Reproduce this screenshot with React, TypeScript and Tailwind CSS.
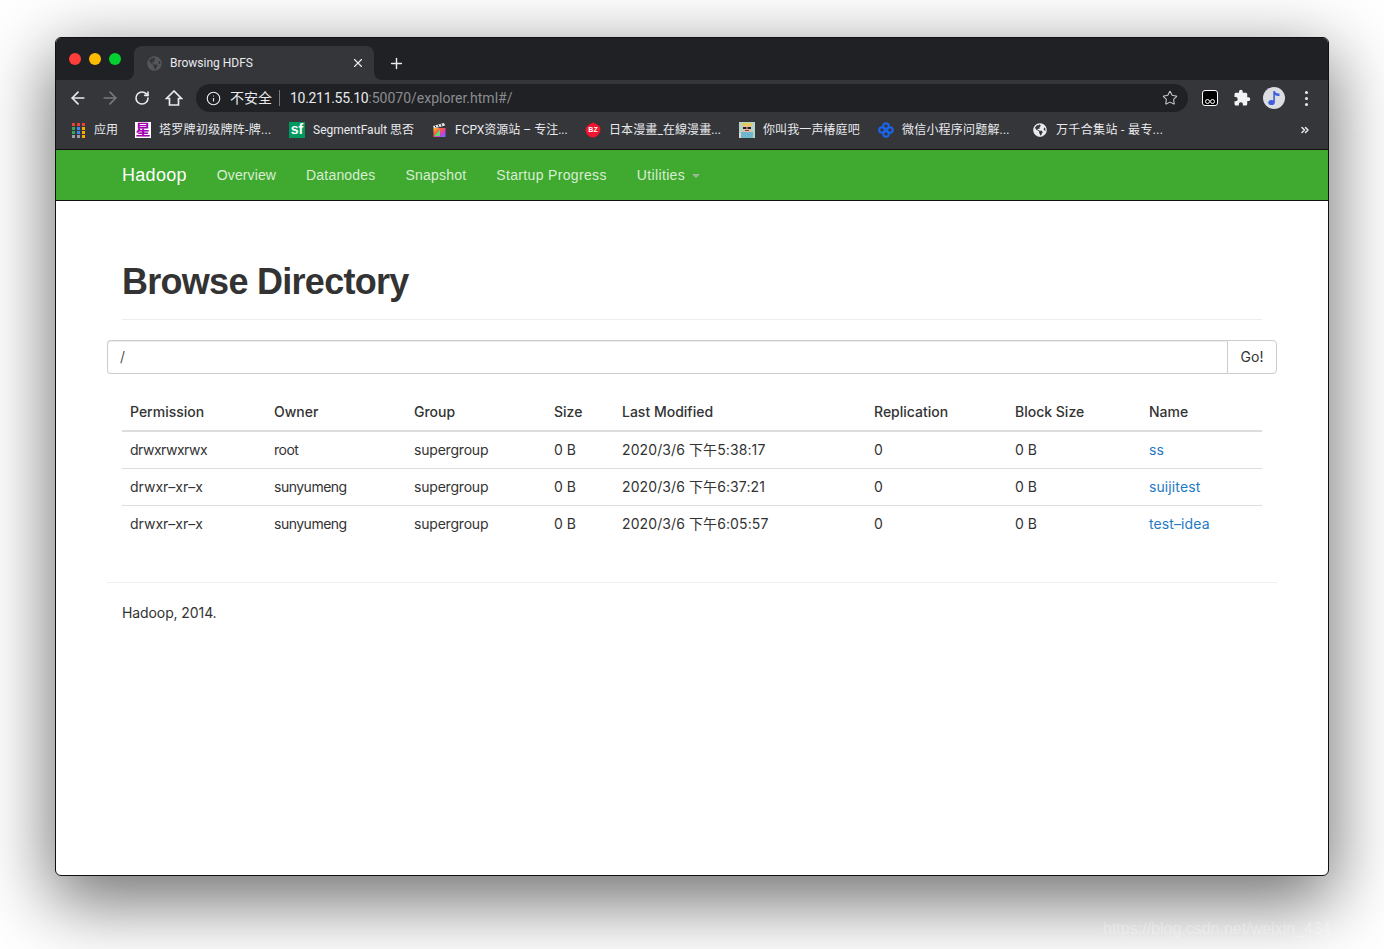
import { ArrowLeft, ArrowRight, ChevronsRight, Info, Plus, RotateCw, Star, X } from "lucide-react";
import { FaGlobeAmericas } from "react-icons/fa";
import { MdExtension } from "react-icons/md";

const cjk = "font-['Roboto','Noto_Sans_CJK_SC',sans-serif]";

const rows = [
  { perm: "drwxrwxrwx", permClass: "tracking-[-0.5px]", owner: "root", time: "2020/3/6 下午5:38:17", name: "ss" },
  { perm: "drwxr–xr–x", permClass: "tracking-[0px]", owner: "sunyumeng", time: "2020/3/6 下午6:37:21", name: "suijitest" },
  { perm: "drwxr–xr–x", permClass: "tracking-[0px]", owner: "sunyumeng", time: "2020/3/6 下午6:05:57", name: "test–idea" },
];

function AppsIcon() {
  const colors = [
    "bg-[#ea4335]", "bg-[#ea4335]", "bg-[#ea4335]",
    "bg-[#34a853]", "bg-[#4285f4]", "bg-[#f9ab00]",
    "bg-[#34a853]", "bg-[#4285f4]", "bg-[#f9ab00]",
    "bg-[#9aa0a6]", "bg-[#9aa0a6]", "bg-[#f9ab00]",
  ];
  return (
    <div className="grid grid-cols-3 gap-x-[2px] gap-y-[1px] w-[13px]">
      {colors.map((c, i) => (
        <div key={i} className={`w-[3px] h-[3px] ${c}`} />
      ))}
    </div>
  );
}

function StarIcon() {
  return (
    <div className={`w-4 h-4 bg-white text-[#a000b0] text-[15px] leading-4 font-bold text-center overflow-hidden ${cjk}`}>星</div>
  );
}

function SfIcon() {
  return (
    <div className="w-4 h-4 bg-[#009a61] text-white text-[14px] leading-[15px] font-bold text-center font-['Liberation_Sans',sans-serif]">sf</div>
  );
}

function FcpxIcon() {
  return (
    <svg width="16" height="16" viewBox="0 0 16 16">
      <path d="M2 4 L13 1 L14 3.5 L3 6.5 Z" fill="#eee" />
      <path d="M4 3.5 L5 5.5 M7 2.8 L8 4.8 M10 2 L11 4" stroke="#222" strokeWidth="1" />
      <defs>
        <linearGradient id="fc" x1="0" y1="0" x2="1" y2="1">
          <stop offset="0" stopColor="#ffd23a" />
          <stop offset="0.35" stopColor="#ff5a3c" />
          <stop offset="0.7" stopColor="#d03cd8" />
          <stop offset="1" stopColor="#3a8cff" />
        </linearGradient>
      </defs>
      <rect x="2.5" y="6" width="12" height="9" fill="url(#fc)" />
      <path d="M3 14 L9 7.5 L9 14 Z" fill="#5bdc6a" />
    </svg>
  );
}

function BzIcon() {
  return (
    <div className="relative w-4 h-4">
      <svg width="16" height="16" viewBox="0 0 16 16" className="absolute inset-0">
        <path d="M8 0.5 C10 1.5 15.5 3 15.5 7 C15.5 12 11 15.5 8 15.5 C4.5 15.5 0.5 12 0.5 8 C0.5 4.5 5 2 8 0.5 Z" fill="#f0142f" />
      </svg>
      <div className="absolute inset-0 text-white text-[7px] leading-4 font-bold text-center font-['Liberation_Sans',sans-serif]">BZ</div>
    </div>
  );
}

function AvatarIcon() {
  return (
    <svg width="16" height="16" viewBox="0 0 16 16">
      <rect width="16" height="16" fill="#b6d3c8" />
      <rect x="3" y="1" width="10" height="3" fill="#e3cb63" />
      <rect x="4" y="4" width="8" height="6" fill="#e8b9a4" />
      <rect x="4" y="5" width="3.5" height="2" fill="#222" />
      <rect x="8.5" y="5" width="3.5" height="2" fill="#222" />
      <rect x="6" y="8" width="4" height="1" fill="#7a4a3a" />
      <rect x="2" y="10" width="12" height="6" fill="#6fb6cf" />
      <rect x="0" y="11" width="2" height="5" fill="#e8d8c8" />
    </svg>
  );
}

function CloverIcon() {
  return (
    <svg width="16" height="16" viewBox="0 0 16 16" fill="none" stroke="#1a66f0" strokeWidth="2">
      <circle cx="8" cy="4" r="2.8" />
      <circle cx="4" cy="8" r="2.8" />
      <circle cx="12" cy="8" r="2.8" />
      <circle cx="8" cy="12" r="2.8" />
    </svg>
  );
}

const bookmarks = [
  { icon: <AppsIcon />, label: "应用", width: "w-[65px]", extra: "" },
  { icon: <StarIcon />, label: "塔罗牌初级牌阵-牌...", width: "w-[154px]", extra: "tracking-[0.3px]" },
  { icon: <SfIcon />, label: "SegmentFault 思否", width: "w-[142px]", extra: "" },
  { icon: <FcpxIcon />, label: "FCPX资源站 – 专注...", width: "w-[154px]", extra: "" },
  { icon: <BzIcon />, label: "日本漫畫_在線漫畫...", width: "w-[154px]", extra: "tracking-[0.1px]" },
  { icon: <AvatarIcon />, label: "你叫我一声椿庭吧", width: "w-[139px]", extra: "tracking-[0.1px]" },
  { icon: <CloverIcon />, label: "微信小程序问题解...", width: "w-[154px]", extra: "tracking-[0.2px]" },
  { icon: <FaGlobeAmericas size={14} className="text-[#e8eaed]" />, label: "万千合集站 - 最专...", width: "w-[140px]", extra: "tracking-[0.35px]" },
];

function TabStrip() {
  return (
    <div className="h-[42px] bg-[#202124] flex items-end">
      <div className="w-[78px] h-full pl-[13px] pt-[15px] flex gap-2">
        <div className="w-3 h-3 rounded-full bg-[#fc3d39]" />
        <div className="w-3 h-3 rounded-full bg-[#fdbc00]" />
        <div className="w-3 h-3 rounded-full bg-[#02d12f]" />
      </div>
      <div className={`relative w-[240px] h-[34px] bg-[#35363a] rounded-t-lg flex items-center pl-[13px] pr-[9px] gap-2 text-[12px] text-[#e8eaed] ${cjk}`}>
        <div className="absolute -left-2 bottom-0 w-2 h-2 bg-[#35363a]">
          <div className="w-2 h-2 bg-[#202124] rounded-br-lg" />
        </div>
        <div className="absolute -right-2 bottom-0 w-2 h-2 bg-[#35363a]">
          <div className="w-2 h-2 bg-[#202124] rounded-bl-lg" />
        </div>
        <FaGlobeAmericas size={15} className="text-[#55565a] shrink-0" />
        <span className="flex-1">Browsing HDFS</span>
        <X size={14} strokeWidth={2} className="text-[#e8eaed]" />
      </div>
      <div className="ml-2 w-7 h-[34px] flex items-center justify-center">
        <Plus size={17} strokeWidth={2} className="text-[#e8eaed]" />
      </div>
    </div>
  );
}

function Toolbar() {
  return (
    <div className="h-[33px] bg-[#35363a] flex items-center px-[6px] pt-[3px]">
      <div className="w-8 flex justify-center"><ArrowLeft size={20} strokeWidth={2} className="text-[#e8eaed]" /></div>
      <div className="w-8 flex justify-center"><ArrowRight size={20} strokeWidth={2} className="text-[#77797d]" /></div>
      <div className="w-8 flex justify-center"><RotateCw size={16} strokeWidth={2.4} className="text-[#e8eaed]" /></div>
      <div className="w-8 flex justify-center">
        <svg width="18" height="18" viewBox="0 0 18 18" fill="none" stroke="#e8eaed" strokeWidth="1.7">
          <path d="M9 2 L1.5 9.5 H4.5 V16 H13.5 V9.5 H16.5 Z" strokeLinejoin="miter" />
        </svg>
      </div>
      <div className={`ml-[6px] flex-1 h-7 rounded-full bg-[#202124] flex items-center pl-[10px] pr-[10px] text-[14px] ${cjk}`}>
        <Info size={15} strokeWidth={1.8} className="text-[#e8eaed]" />
        <span className="ml-[9px] text-[#e8eaed]">不安全</span>
        <div className="ml-[7px] w-px h-4 bg-[#77797d]" />
        <span className="ml-[10px] text-[#e8eaed] tracking-[-0.3px]">10.211.55.10</span>
        <span className="text-[#8b8d91]">:50070/explorer.html#/</span>
        <Star size={16} strokeWidth={1.6} className="ml-auto text-[#c4c6c9]" />
      </div>
      <div className="ml-[6px] w-8 flex justify-center">
        <div className="relative w-4 h-4 rounded-[3px] bg-black border border-white">
          <div className="absolute left-[2px] bottom-[1px] w-[5px] h-[5px] rounded-full border border-white" />
          <div className="absolute right-[2px] bottom-[1px] w-[5px] h-[5px] rounded-full border border-white" />
        </div>
      </div>
      <div className="w-8 flex justify-center"><MdExtension size={18} className="text-[#f1f3f4]" /></div>
      <div className="w-8 flex justify-center">
        <div className="w-[22px] h-[22px] rounded-full bg-[#dcdde0] flex items-center justify-center">
          <svg width="14" height="16" viewBox="0 0 14 16" fill="#3f5fdc">
            <ellipse cx="4.5" cy="12.5" rx="3.2" ry="2.6" />
            <path d="M6.3 12.5 V1 H7.8 C8.2 3 10.5 3.4 12.5 3.6 V6 C10.5 6 9 5.6 7.9 5 V12.5 Z" />
          </svg>
        </div>
      </div>
      <div className="w-8 flex flex-col items-center gap-[3px]">
        <div className="w-[3px] h-[3px] rounded-full bg-[#e8eaed]" />
        <div className="w-[3px] h-[3px] rounded-full bg-[#e8eaed]" />
        <div className="w-[3px] h-[3px] rounded-full bg-[#e8eaed]" />
      </div>
    </div>
  );
}

function BookmarksBar() {
  return (
    <div className={`h-9 bg-[#35363a] flex items-center pl-[14px] pr-4 pb-[2px] text-[12px] text-[#e8eaed] ${cjk}`}>
      {bookmarks.map((b) => (
        <div key={b.label} className={`${b.width} flex items-center gap-2 shrink-0`}>
          <div className="w-4 flex justify-center shrink-0">{b.icon}</div>
          <span className={`whitespace-nowrap ${b.extra}`}>{b.label}</span>
        </div>
      ))}
      <ChevronsRight size={12} strokeWidth={3} className="ml-auto mr-[1px] text-[#e8eaed]" />
    </div>
  );
}

function Navbar() {
  const links = [
    { label: "Overview", track: "tracking-[0.1px]" },
    { label: "Datanodes", track: "tracking-[0.2px]" },
    { label: "Snapshot", track: "tracking-[0.2px]" },
    { label: "Startup Progress", track: "tracking-[0.34px]" },
  ];
  return (
    <div className="h-[52px] bg-[#40a92f] border-y border-[#111111] flex justify-center font-['Liberation_Sans',sans-serif]">
      <div className="w-[1170px] px-[15px] flex items-center text-[14px] text-[#d9eed5]">
        <span className="text-[18px] text-white pr-[15px] tracking-[0.3px]">Hadoop</span>
        {links.map((l) => (
          <span key={l.label} className={`px-[15px] ${l.track}`}>{l.label}</span>
        ))}
        <span className="pl-[15px] tracking-[0.35px]">Utilities</span>
        <div className="ml-[7px] mt-[2px] w-0 h-0 border-x-4 border-t-4 border-x-transparent border-t-[#9fb59b]" />
      </div>
    </div>
  );
}

export default function App() {
  const cols = ["w-[144px]", "w-[140px]", "w-[140px]", "w-[68px]", "w-[252px]", "w-[141px]", "w-[134px]", "w-[121px]"];
  const heads = ["Permission", "Owner", "Group", "Size", "Last Modified", "Replication", "Block Size", "Name"];

  return (
    <div className="relative h-[949px] overflow-hidden bg-white pt-[37px] pl-[55px] font-['Inter','Noto_Sans_CJK_SC',sans-serif]">
      <div className="w-[1274px] h-[839px] rounded-[6px] border border-[#111111] bg-white overflow-hidden shadow-[0_22px_70px_4px_rgba(0,0,0,0.56)]">
        <TabStrip />
        <Toolbar />
        <BookmarksBar />
        <Navbar />

        <div className="w-[1170px] mx-auto text-[14px] text-[#333333]">
          <div className="mx-[15px] pt-[61px] pb-[17px] border-b border-[#eeeeee]">
            <h1 className="text-[36px] leading-10 font-bold text-[#333333] font-['Liberation_Sans',sans-serif] tracking-[-0.72px]">Browse Directory</h1>
          </div>

          <div className="mt-5 flex h-[34px]">
            <div className="flex-1 border border-r-0 border-[#cccccc] rounded-l-[4px] px-3 leading-8 text-[#555555] shadow-[inset_0_1px_1px_rgba(0,0,0,0.075)]">/</div>
            <div className="w-[50px] border border-[#cccccc] rounded-r-[4px] text-center leading-8">Go!</div>
          </div>

          <div className="mx-[15px] mt-5">
            <table className="w-[1140px] table-fixed border-collapse">
              <thead>
                <tr className="h-[37px] border-b-2 border-[#dddddd]">
                  {heads.map((h, i) => (
                    <th key={h} className={`${cols[i]} px-2 pb-[2px] text-left font-medium`}>{h}</th>
                  ))}
                </tr>
              </thead>
              <tbody>
                {rows.map((r, i) => (
                  <tr key={r.name} className={i < 2 ? "h-[37px] border-b border-[#dddddd]" : "h-[36px]"}>
                    <td className={`px-2 ${r.permClass}`}>{r.perm}</td>
                    <td className="px-2 tracking-[-0.5px]">{r.owner}</td>
                    <td className="px-2 tracking-[-0.2px]">supergroup</td>
                    <td className="px-2">0 B</td>
                    <td className="px-2 tracking-[0.1px]">{r.time}</td>
                    <td className="px-2">0</td>
                    <td className="px-2">0 B</td>
                    <td className="px-2 text-[#1f7ac4] tracking-[0.1px]">{r.name}</td>
                  </tr>
                ))}
              </tbody>
            </table>
          </div>

          <div className="mt-[41px] border-t border-[#eeeeee] pt-5 px-[15px] leading-5 tracking-[-0.1px]">Hadoop, 2014.</div>
        </div>
      </div>

      <div className="absolute left-[1103px] top-[919px] text-[16px] leading-5 whitespace-nowrap text-white/30 font-['Liberation_Sans',sans-serif]">https://blog.csdn.net/weixin_434</div>
    </div>
  );
}
